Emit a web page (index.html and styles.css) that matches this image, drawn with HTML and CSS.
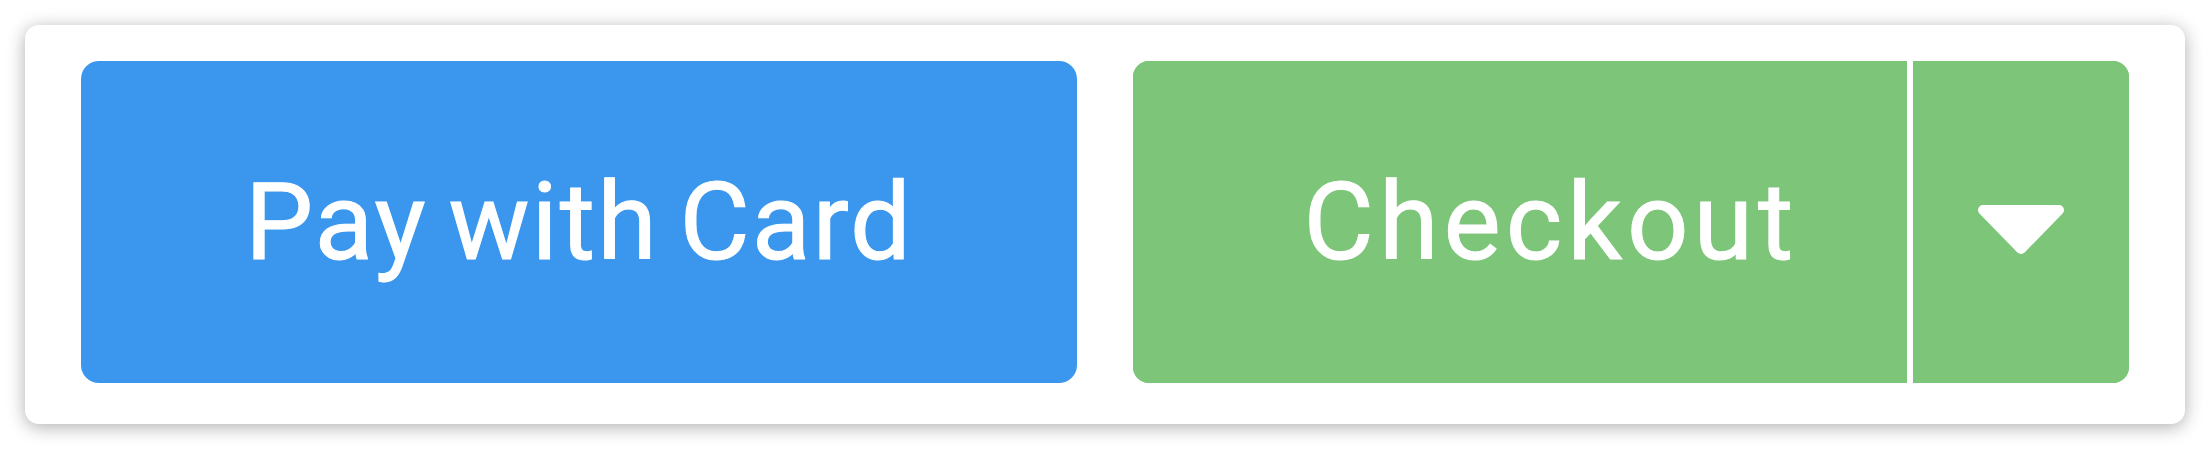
FILE: index.html
```html
<!DOCTYPE html>
<html lang="en">
<head>
    <meta charset="UTF-8">
    <meta name="viewport" content="width=device-width, initial-scale=1.0">
    <title>Payment Buttons</title>
    <link rel="stylesheet" href="styles.css">
</head>
<body>
    <div class="panel">
        <button type="button" class="btn btn-card">Pay with Card</button>
        <div class="split">
            <button type="button" class="btn split-main">Checkout</button>
            <button type="button" class="btn split-toggle" aria-label="More options">
                <svg class="caret" width="86" height="49" viewBox="0 0 86 49">
                    <path d="M5 5 L81 5 L43 44 Z" fill="#fff" stroke="#fff" stroke-width="10" stroke-linejoin="round"/>
                </svg>
            </button>
        </div>
    </div>
</body>
</html>
```

FILE: styles.css
```css
:root {
    --blue: #3b97ed;
    --green: #7dc579;
    --white: #ffffff;
}

body {
    margin: 0;
    padding: 25px;
    background-color: var(--white);
    font-family: Roboto, "Liberation Sans", sans-serif;
}

.panel {
    width: 2160px;
    box-sizing: border-box;
    padding: 36px 56px 41px;
    display: flex;
    gap: 56px;
    background-color: var(--white);
    border-radius: 14px;
    box-shadow: 0 3px 18px rgba(0, 0, 0, 0.32);
}

.btn {
    box-sizing: border-box;
    border: none;
    margin: 0;
    padding: 0;
    color: var(--white);
    font-family: inherit;
    font-size: 108px;
    font-weight: 400;
    letter-spacing: 2px;
    word-spacing: -8px;
    -webkit-text-stroke: 1px var(--white);
    cursor: pointer;
}

.btn-card {
    flex: 1;
    height: 322px;
    background-color: var(--blue);
    border-radius: 18px;
}

.split {
    flex: 1;
    height: 322px;
    display: flex;
    border-radius: 16px;
    overflow: hidden;
    background-color: var(--green);
}

.split-main {
    flex: 1;
    padding-left: 62px;
    letter-spacing: 5px;
    background-color: var(--green);
}

.split-toggle {
    flex: none;
    width: 222px;
    border-left: 6px solid var(--white);
    display: flex;
    align-items: center;
    justify-content: center;
    background-color: var(--green);
}

.caret {
    display: block;
    margin-top: 15px;
}
```
